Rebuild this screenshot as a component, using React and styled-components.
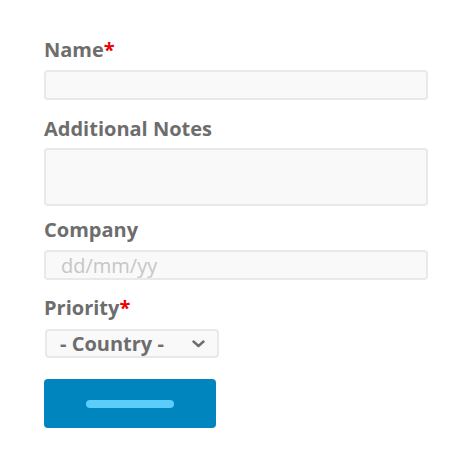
import React from 'react';
import styled, { createGlobalStyle } from 'styled-components';

const GlobalStyle = createGlobalStyle`
  body {
    margin: 0;
    background: #ffffff;
    font-family: "Open Sans", "Liberation Sans", sans-serif;
  }
`;

const Form = styled.form`
  display: flex;
  flex-direction: column;
  padding: 38px 46px 0 44px;
  width: 474px;
  box-sizing: border-box;
`;

const Field = styled.div`
  display: flex;
  flex-direction: column;
  margin-bottom: ${(p) => p.$gap}px;
`;

const Label = styled.label`
  font-size: 20px;
  line-height: 24px;
  font-weight: 700;
  color: #6d6d6d;
  margin-bottom: ${(p) => p.$gap || 8}px;
`;

const Required = styled.span`
  color: #ee0000;
`;

const Input = styled.input`
  box-sizing: border-box;
  width: 384px;
  height: 30px;
  padding: 0 15px;
  border: 2px solid #e7eae9;
  border-radius: 4px;
  background: #f9f9f9;
  font-family: inherit;
  font-size: 20px;
  color: #666;
  outline: none;

  &::placeholder {
    color: #c6c6c6;
  }
`;

const TextArea = styled.textarea`
  box-sizing: border-box;
  width: 384px;
  height: 58px;
  border: 2px solid #e7eae9;
  border-radius: 4px;
  background: #f9f9f9;
  resize: none;
  outline: none;
`;

const SelectBox = styled.div`
  box-sizing: border-box;
  display: flex;
  align-items: center;
  justify-content: space-between;
  width: 174px;
  height: 29px;
  margin-left: 1px;
  padding: 0 12px 0 13px;
  border: 2px solid #e7eae9;
  border-radius: 4px;
  background: #f9f9f9;
  font-size: 20px;
  font-weight: 700;
  color: #6d6d6d;
`;

const Button = styled.button`
  display: flex;
  align-items: center;
  justify-content: center;
  width: 172px;
  height: 49px;
  border: none;
  border-radius: 4px;
  background: #0085bf;
  padding: 0;
`;

const ButtonBar = styled.span`
  display: block;
  width: 88px;
  height: 8px;
  border-radius: 4px;
  background: #5bcdfb;
`;

const Chevron = () => (
  <svg width="13" height="8" viewBox="0 0 13 8">
    <path d="M1.5 1.5 L6.5 6 L11.5 1.5" fill="none" stroke="#6d6d6d" strokeWidth="2.4" strokeLinecap="round" strokeLinejoin="round" />
  </svg>
);

export default function App() {
  return (
    <>
      <GlobalStyle />
      <Form onSubmit={(e) => e.preventDefault()}>
        <Field $gap={17}>
          <Label>
            Name<Required>*</Required>
          </Label>
          <Input type="text" />
        </Field>
        <Field $gap={12}>
          <Label $gap={7}>Additional Notes</Label>
          <TextArea />
        </Field>
        <Field $gap={16}>
          <Label>Company</Label>
          <Input type="text" placeholder="dd/mm/yy" />
        </Field>
        <Field $gap={21}>
          <Label $gap={9}>
            Priority<Required>*</Required>
          </Label>
          <SelectBox>
            <span>- Country -</span>
            <Chevron />
          </SelectBox>
        </Field>
        <Button type="submit">
          <ButtonBar />
        </Button>
      </Form>
    </>
  );
}
